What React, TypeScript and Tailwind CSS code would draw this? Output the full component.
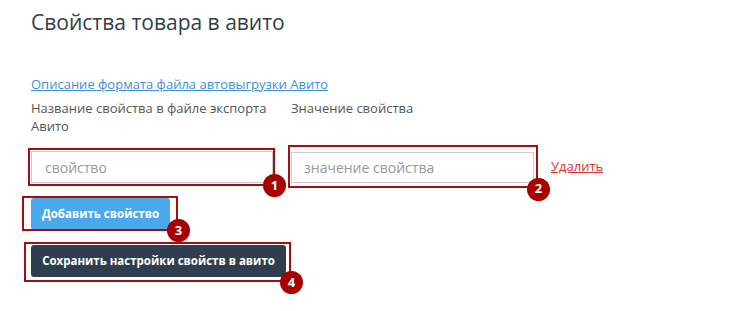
import type { ReactNode } from 'react'

// Красная рамка-аннотация с номером в правом нижнем углу
function Mark({
  n,
  box,
  badge,
  children,
}: {
  n: number
  box: string
  badge: string
  children: ReactNode
}) {
  return (
    <div className="relative">
      {children}
      <div className={`pointer-events-none absolute border-2 border-[#a30f0f] ${box}`} />
      <div
        className={`absolute flex h-[23px] w-[23px] items-center justify-center rounded-full bg-[#a80000] text-[13px] font-bold text-white ${badge}`}
      >
        {n}
      </div>
    </div>
  )
}

export default function App() {
  return (
    <div
      className="h-[311px] w-[740px] bg-white pl-[31px] pt-[7px] text-[#555]"
      style={{ fontFamily: '"Open Sans", "Noto Sans", sans-serif' }}
    >
      <h1 className="text-[21px] leading-[30px] text-[#333d47]">Свойства товара в авито</h1>

      <a href="#" className="mt-[38px] block text-[13px] leading-[18px] text-[#3d8fd6] underline">
        Описание формата файла автовыгрузки Авито
      </a>

      <div className="mt-[6px] flex gap-[18px] text-[13px] leading-[18px] text-[#555]">
        <div className="w-[242px] pr-[6px]">Название свойства в файле экспорта Авито</div>
        <div className="w-[243px]">Значение свойства</div>
      </div>

      <div className="mt-[16px] flex items-center gap-[18px]">
        <Mark n={1} box="-left-[3px] -top-[3px] -right-[2px] -bottom-[3px]" badge="-right-[13px] -bottom-[14px]">
          <input
            placeholder="свойство"
            className="block h-[32px] w-[242px] border border-[#ccc] px-[13px] text-[14px] text-[#555] placeholder:text-[#999] outline-none"
          />
        </Mark>
        <Mark n={2} box="-left-[3px] -top-[7px] -right-[4px] -bottom-[5px]" badge="-right-[16px] -bottom-[18px]">
          <input
            placeholder="значение свойства"
            className="block h-[31px] w-[243px] border border-[#ccc] px-[12px] text-[14px] text-[#555] placeholder:text-[#999] outline-none"
          />
        </Mark>
        <a href="#" className="-ml-[1px] text-[13px] text-[#d9322b] underline">
          Удалить
        </a>
      </div>

      <div className="mt-[15px] flex">
        <Mark n={3} box="-left-[9px] -top-[2px] -right-[8px] -bottom-[1px]" badge="-right-[20px] -bottom-[12px]">
          <button className="block h-[32px] w-[139px] rounded-[3px] bg-[#4aa8ed] text-[11.5px] font-bold text-white">
            Добавить свойство
          </button>
        </Mark>
      </div>

      <div className="mt-[15px] flex">
        <Mark n={4} box="-left-[7px] -top-[3px] -right-[5px] -bottom-[5px]" badge="-right-[17px] -bottom-[17px]">
          <button className="block h-[32px] w-[255px] rounded-[3px] bg-[#2f3e4e] text-[11.5px] font-bold text-white">
            Сохранить настройки свойств в авито
          </button>
        </Mark>
      </div>
    </div>
  )
}
